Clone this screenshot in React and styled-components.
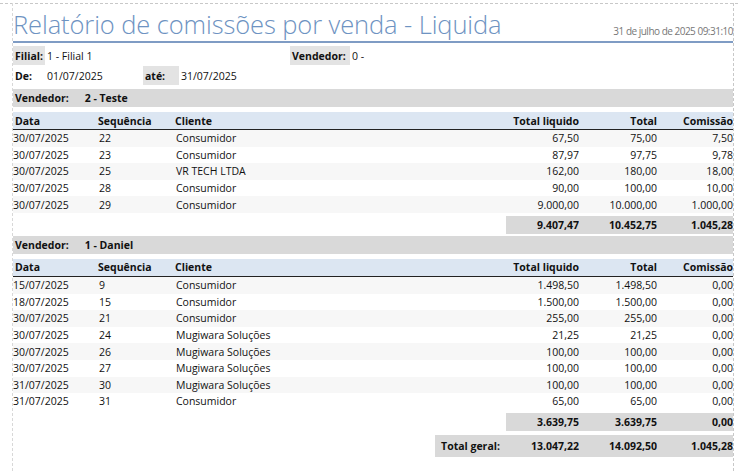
import React from "react";
import styled, { createGlobalStyle } from "styled-components";

const G = createGlobalStyle`
  body { margin: 0; background: #fff; font-family: "Open Sans", "Noto Sans", sans-serif; color: #111; }
`;
const Page = styled.div`
  position: relative; width: 748px; height: 471px; overflow: hidden;
  padding: 4px 15px 0 13px; box-sizing: border-box;
  &:before { content: ""; position: absolute; left: 0; right: 10px; top: 3px; border-top: 1px dashed #c8c8c8; }
  &:after { content: ""; position: absolute; left: 733px; top: 3px; bottom: 0; border-left: 1px dashed #c8c8c8; }
`;
const LeftDash = styled.div`position:absolute; left: 12px; top:3px; bottom:0; border-left:1px dashed #d8d8d8;`;
const TitleBar = styled.div`
  display: flex; justify-content: space-between; align-items: flex-end;
  border-bottom: 2px solid #7f9cc4; height: 37px;
`;
const Title = styled.div`font-size: 25.5px; font-weight: 300; color: #6e93c2; line-height: 34px; letter-spacing: -0.1px;`;
const Stamp = styled.div`font-size: 10px; color: #777; padding-bottom: 3px; letter-spacing: -0.5px;`;
const Filters = styled.div`display: grid; grid-template-columns: 32px 98px 36px 111px 60px 1fr; grid-auto-rows: 19px; row-gap: 1px; margin-top: 3px; font-size: 10.5px; align-items: center;`;
const Lbl = styled.div`background: ${p => p.bg ? "#e3e3e3" : "transparent"}; font-weight: 700; height: 100%; display: flex; align-items: center; padding-left: 2px;`;
const Val = styled.div`padding-left: 2px; grid-column: ${p => p.span || "auto"};`;
const Group = styled.div`background: #d9d9d9; height: 18px; margin-top: ${p => p.mt}px; display: flex; align-items: center; font-weight: 700; font-size: 10.5px; padding-left: 2px; gap: 16px;`;
const Row = styled.div`
  display: grid; grid-template-columns: 85px 77px 1fr 73px 78px 76px; height: ${p => p.h || 16.6}px; align-items: center; font-size: 10.5px;
  background: ${p => p.bg || "transparent"};
  font-weight: ${p => p.bold ? 700 : 400};
  border-bottom: ${p => p.line ? "1.5px solid #222" : "none"};
  margin-top: ${p => p.mt || 0}px;
  & > div:nth-child(n+4) { text-align: right; }
`;
const Cell = styled.div`white-space: nowrap; padding-left: ${p => p.pl || 0}px;`;
const Tot = styled.div`display: grid; grid-template-columns: ${p => p.cols}; justify-content: end; height: ${p => p.h}px; align-items: center; margin-top: ${p => p.mt}px; font-size: 10.5px; font-weight: 700;`;
const TotCell = styled.div`background: #d9d9d9; height: 100%; display: flex; align-items: center; justify-content: ${p => p.c ? "center" : "flex-end"};`;

const g1 = [
  ["30/07/2025","22","Consumidor","67,50","75,00","7,50"],
  ["30/07/2025","23","Consumidor","87,97","97,75","9,78"],
  ["30/07/2025","25","VR TECH LTDA","162,00","180,00","18,00"],
  ["30/07/2025","28","Consumidor","90,00","100,00","10,00"],
  ["30/07/2025","29","Consumidor","9.000,00","10.000,00","1.000,00"],
];
const g2 = [
  ["15/07/2025","9","Consumidor","1.498,50","1.498,50","0,00"],
  ["18/07/2025","15","Consumidor","1.500,00","1.500,00","0,00"],
  ["30/07/2025","21","Consumidor","255,00","255,00","0,00"],
  ["30/07/2025","24","Mugiwara Soluções","21,25","21,25","0,00"],
  ["30/07/2025","26","Mugiwara Soluções","100,00","100,00","0,00"],
  ["30/07/2025","27","Mugiwara Soluções","100,00","100,00","0,00"],
  ["31/07/2025","30","Mugiwara Soluções","100,00","100,00","0,00"],
  ["31/07/2025","31","Consumidor","65,00","65,00","0,00"],
];
const Head = ({ mt }) => (
  <Row bg="#dce6f2" bold line h={17} mt={mt}>
    <Cell pl={2}>Data</Cell><Cell>Sequência</Cell><Cell>Cliente</Cell><Cell>Total liquido</Cell><Cell>Total</Cell><Cell>Comissão</Cell>
  </Row>
);
const Body = ({ rows }) => rows.map((r, i) => (
  <Row key={i} bg={i % 2 === 0 ? "#f7f7f7" : "#fff"}>
    {r.map((c, j) => <Cell key={j} pl={j === 0 ? 0 : 1}>{c}</Cell>)}
  </Row>
));

export default function App() {
  return (
    <Page>
      <G />
      <LeftDash />
      <TitleBar><Title>Relatório de comissões por venda - Liquida</Title><Stamp>31 de julho de 2025 09:31:10</Stamp></TitleBar>
      <Filters>
        <Lbl bg>Filial:</Lbl><Val span="2 / 5">1 - Filial 1</Val><Lbl bg>Vendedor:</Lbl><Val>0 -</Val>
        <Lbl>De:</Lbl><Val>01/07/2025</Val><Lbl bg>até:</Lbl><Val>31/07/2025</Val>
      </Filters>
      <Group mt={4}><span>Vendedor:</span><span>2 - Teste</span></Group>
      <Head mt={5} />
      <Body rows={g1} />
      <Tot cols="73px 78px 76px" h={18} mt={3}><TotCell>9.407,47</TotCell><TotCell>10.452,75</TotCell><TotCell>1.045,28</TotCell></Tot>
      <Group mt={2}><span>Vendedor:</span><span>1 - Daniel</span></Group>
      <Head mt={5} />
      <Body rows={g2} />
      <Tot cols="73px 78px 76px" h={18} mt={3}><TotCell>3.639,75</TotCell><TotCell>3.639,75</TotCell><TotCell>0,00</TotCell></Tot>
      <Tot cols="71px 73px 78px 76px" h={22} mt={4}><TotCell c>Total geral:</TotCell><TotCell>13.047,22</TotCell><TotCell>14.092,50</TotCell><TotCell>1.045,28</TotCell></Tot>
    </Page>
  );
}
